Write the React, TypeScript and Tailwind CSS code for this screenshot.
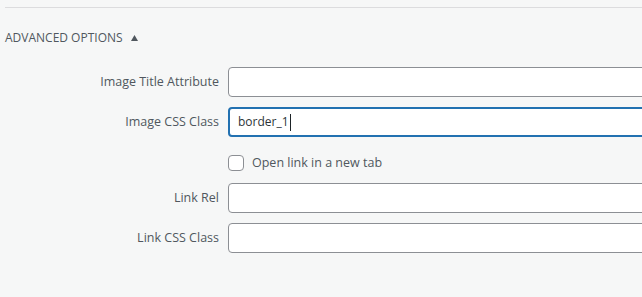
const rows = [
  { label: "Image Title Attribute", value: "" },
  { label: "Image CSS Class", value: "border_1", focused: true },
];

const linkRows = [
  { label: "Link Rel", value: "" },
  { label: "Link CSS Class", value: "" },
];

function Field({ label, value, focused }: { label: string; value: string; focused?: boolean }) {
  return (
    <div className="flex items-center h-[30px]">
      <div className="w-[219px] shrink-0 text-right text-[12.5px] text-[#50575e]">{label}</div>
      <div
        className={`ml-[9px] w-[460px] shrink-0 h-[30px] rounded-[4px] bg-white flex items-center text-[12px] text-[#2c3338] ${
          focused ? "border-2 border-[#2271b1] pl-[8px]" : "border border-[#8c8f94] pl-[10px]"
        }`}
      >
        {value}
        {focused && <span className="inline-block w-px h-[17px] bg-[#1d2327] ml-px" />}
      </div>
    </div>
  );
}

export default function App() {
  return (
    <div
      className="w-[642px] h-[297px] overflow-hidden bg-[#f6f7f7] pt-[7px]"
      style={{ fontFamily: '"Open Sans", "Noto Sans", sans-serif' }}
    >
      {/* ── Divider ── */}
      <div className="ml-[5px] h-px bg-[#dcdcde]" />

      {/* ── Heading ── */}
      <div className="flex items-center mt-[21px] ml-[5px] h-[18px] text-[12px] text-[#50575e] uppercase">
        Advanced Options
        <svg width="7" height="6" viewBox="0 0 7 6" className="ml-[8px]" aria-hidden="true">
          <polygon points="3.5,0 7,6 0,6" fill="#50575e" />
        </svg>
      </div>

      {/* ── Fields ── */}
      <div className="mt-[20px] flex flex-col gap-[10px]">
        {rows.map((r) => (
          <Field key={r.label} {...r} />
        ))}
      </div>

      <div className="flex items-center ml-[228px] mt-[18px] h-[16px]">
        <span className="w-[16px] h-[16px] rounded-[4px] border border-[#8c8f94] bg-white" />
        <span className="ml-[8px] text-[12.5px] text-[#50575e]">Open link in a new tab</span>
      </div>

      <div className="mt-[12px] flex flex-col gap-[10px]">
        {linkRows.map((r) => (
          <Field key={r.label} {...r} />
        ))}
      </div>
    </div>
  );
}
